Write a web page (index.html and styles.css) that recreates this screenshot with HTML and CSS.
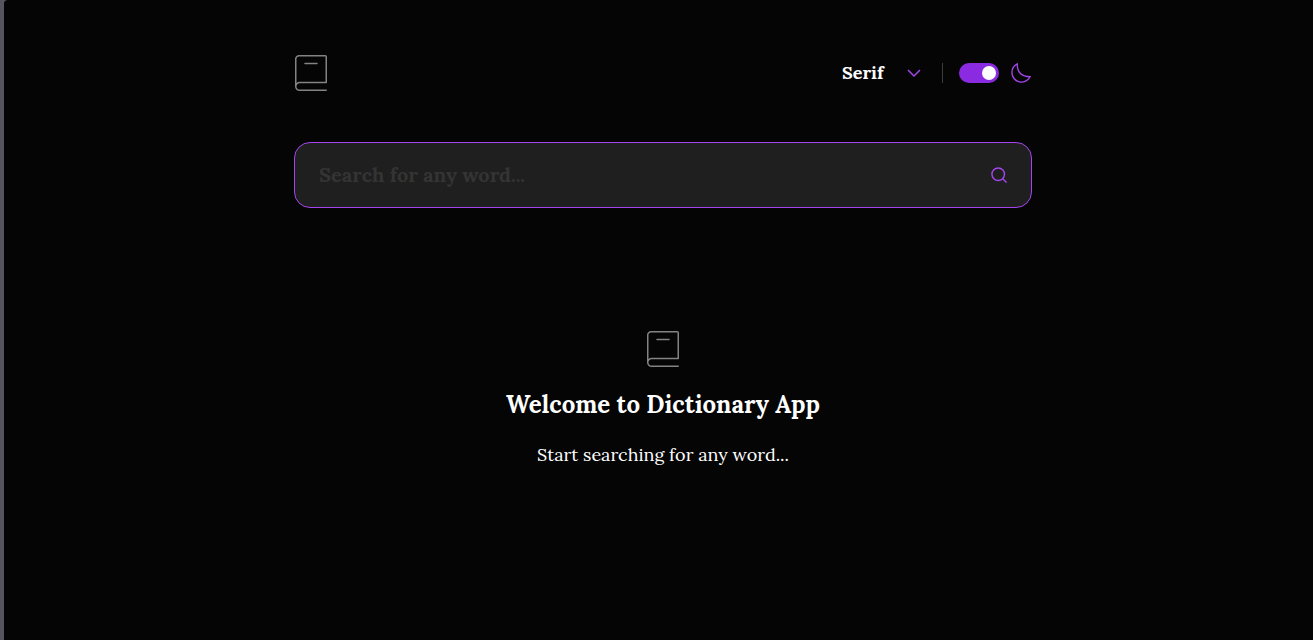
FILE: index.html
```html
<!DOCTYPE html>
<html lang="en">
<head>
<meta charset="utf-8">
<meta name="viewport" content="width=device-width, initial-scale=1">
<title>Dictionary App</title>
<link rel="stylesheet" href="styles.css">
</head>
<body>
<svg class="sprite" aria-hidden="true">
  <symbol id="book" viewBox="0 0 34 38">
    <g fill="none" stroke="#838383" stroke-width="1.5" stroke-linecap="round" stroke-linejoin="round">
      <path d="M1.750 32.500V5a3.250 3.250 0 0 1 3.250-3.250h26.250a1 1 0 0 1 1 1v25.850H5.600a3.850 3.850 0 0 0-3.850 3.900 3.750 3.750 0 0 0 3.850 3.750H32.250"/>
      <path d="M11 9.600h12"/>
    </g>
  </symbol>
</svg>
<div class="page">
  <header class="header">
    <svg class="book" role="img" aria-label="Dictionary"><use href="#book"/></svg>
    <div class="controls">
      <div class="font-picker">
        <select class="font-select" aria-label="Font">
          <option>Sans Serif</option>
          <option selected>Serif</option>
          <option>Mono</option>
        </select>
        <svg class="chevron" viewBox="0 0 14 8" aria-hidden="true"><path d="m1 1 6 6 6-6"/></svg>
      </div>
      <label class="theme">
        <input class="switch" type="checkbox" role="switch" aria-label="Dark mode" checked>
        <svg class="moon" viewBox="0 0 22 22" aria-hidden="true"><path d="M1 10.449a10.544 10.544 0 0 0 19.993 4.686C11.544 15.135 6.858 10.448 6.858 1A10.545 10.545 0 0 0 1 10.449Z"/></svg>
      </label>
    </div>
  </header>
  <main>
    <form class="search">
      <input class="search-input" type="text" aria-label="Search" placeholder="Search for any word...">
      <button class="search-button" type="button" aria-label="Search">
        <svg class="lens" viewBox="0 0 17 17" aria-hidden="true"><path d="m12.663 12.663 3.887 3.887M1 7.664a6.665 6.665 0 1 0 13.330 0 6.665 6.665 0 1 0-13.330 0Z"/></svg>
      </button>
    </form>
    <section class="welcome">
      <svg class="book" aria-hidden="true"><use href="#book"/></svg>
      <h1 class="title">Welcome to Dictionary App</h1>
      <p class="hint">Start searching for any word...</p>
    </section>
  </main>
</div>
</body>
</html>
```
FILE: styles.css
```css
* {
  box-sizing: border-box;
}

html {
  background: #55555d;
}

body {
  min-height: 100vh;
  margin: 0 0 0 4px;
  padding-left: 9px;
  border-top-left-radius: 4px;
  background: #050505;
  color: #fff;
  font-family: Lora, "Liberation Serif", serif;
}

.sprite {
  display: block;
  width: 0;
  height: 0;
}

.page {
  max-width: 786px;
  margin: 0 auto;
  padding: 54px 24px;
}

.header,
.controls,
.theme,
.font-picker {
  display: flex;
  align-items: center;
}

.header {
  justify-content: space-between;
  margin-bottom: 50px;
}

.book {
  display: block;
  width: 34px;
  height: 38px;
}

.controls {
  gap: 16px;
  padding-right: 1px;
}

.font-picker {
  position: relative;
}

.font-select {
  width: 84px;
  height: 24px;
  padding: 0;
  border: 0;
  appearance: none;
  background: transparent;
  color: #fff;
  font: bold 18px/24px Lora, "Liberation Serif", serif;
}

.chevron {
  position: absolute;
  right: 5px;
  width: 14px;
  height: 8px;
  pointer-events: none;
}

.chevron,
.moon,
.lens {
  fill: none;
  stroke: #a445ed;
  stroke-width: 1.5;
}

.chevron {
  overflow: visible;
}

.theme {
  gap: 12px;
  height: 20px;
  padding-left: 16px;
  border-left: 1px solid #3a3a3a;
}

.switch {
  display: flex;
  align-items: center;
  justify-content: flex-end;
  width: 40px;
  height: 20px;
  margin: 0;
  padding: 3px;
  appearance: none;
  border-radius: 10px;
  background: #8a2be2;
}

.switch::before {
  width: 14px;
  height: 14px;
  border-radius: 50%;
  background: #fff;
  content: "";
}

.moon {
  width: 20px;
  height: 20px;
}

.search {
  display: flex;
  align-items: center;
  height: 66px;
  padding: 0 24px;
  border: 1px solid #a445ed;
  border-radius: 16px;
  background: #1f1f1f;
}

.search-input {
  flex: 1;
  min-width: 0;
  padding: 0;
  border: 0;
  outline: 0;
  background: transparent;
  color: #fff;
  font: bold 20px/28px Lora, "Liberation Serif", serif;
}

.search-input::placeholder {
  color: #343434;
  opacity: 1;
}

.search-button {
  padding: 0;
  border: 0;
  background: transparent;
}

.lens {
  display: block;
  width: 16px;
  height: 16px;
}

.welcome {
  display: flex;
  flex-direction: column;
  align-items: center;
  padding-top: 122px;
  text-align: center;
}

.title {
  margin: 20px 0;
  font-size: 24px;
  line-height: 34px;
}

.hint {
  margin: 0;
  font-size: 18px;
  line-height: 26px;
}
```
